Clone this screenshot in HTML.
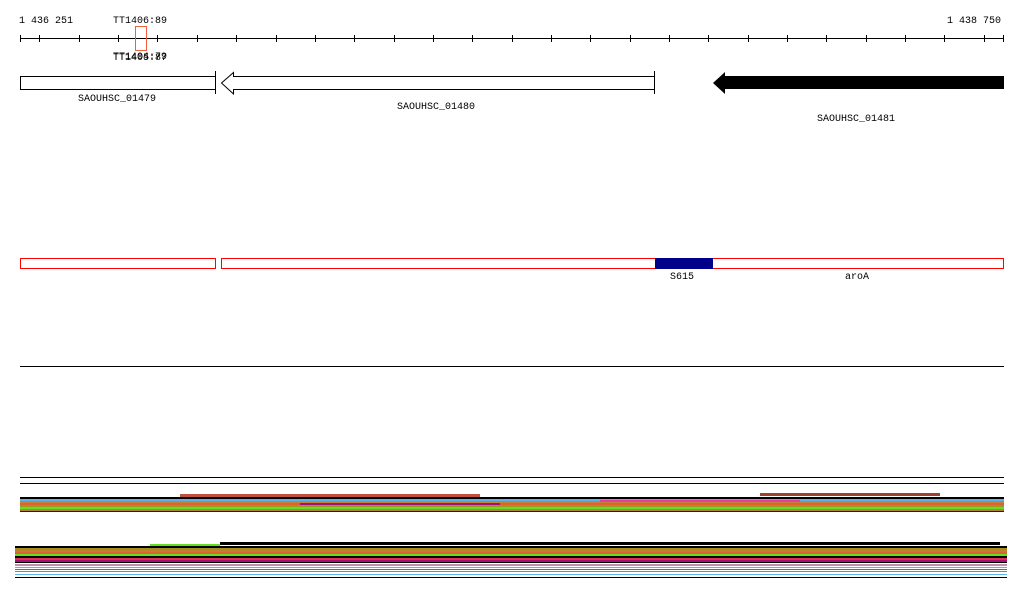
<!DOCTYPE html>
<html><head><style>html,body{margin:0;padding:0;background:#fff;width:1024px;height:611px;overflow:hidden}
svg text{font-family:"Liberation Mono",monospace;font-size:10px}</style></head><body>
<svg width="1024" height="611" xmlns="http://www.w3.org/2000/svg" shape-rendering="crispEdges">
<text x="19" y="23">1 436 251</text>
<text x="113" y="23">TT1406:89</text>
<text x="947" y="23">1 438 750</text>
<line x1="20" y1="38.5" x2="1004" y2="38.5" stroke="#000"/>
<g stroke="#000">
<line x1="20.5" y1="35" x2="20.5" y2="42"/><line x1="39.5" y1="35" x2="39.5" y2="42"/><line x1="79.5" y1="35" x2="79.5" y2="42"/><line x1="118.5" y1="35" x2="118.5" y2="42"/><line x1="157.5" y1="35" x2="157.5" y2="42"/><line x1="197.5" y1="35" x2="197.5" y2="42"/><line x1="236.5" y1="35" x2="236.5" y2="42"/><line x1="276.5" y1="35" x2="276.5" y2="42"/><line x1="315.5" y1="35" x2="315.5" y2="42"/><line x1="354.5" y1="35" x2="354.5" y2="42"/><line x1="394.5" y1="35" x2="394.5" y2="42"/><line x1="433.5" y1="35" x2="433.5" y2="42"/><line x1="472.5" y1="35" x2="472.5" y2="42"/><line x1="512.5" y1="35" x2="512.5" y2="42"/><line x1="551.5" y1="35" x2="551.5" y2="42"/><line x1="590.5" y1="35" x2="590.5" y2="42"/><line x1="630.5" y1="35" x2="630.5" y2="42"/><line x1="669.5" y1="35" x2="669.5" y2="42"/><line x1="708.5" y1="35" x2="708.5" y2="42"/><line x1="748.5" y1="35" x2="748.5" y2="42"/><line x1="787.5" y1="35" x2="787.5" y2="42"/><line x1="826.5" y1="35" x2="826.5" y2="42"/><line x1="866.5" y1="35" x2="866.5" y2="42"/><line x1="905.5" y1="35" x2="905.5" y2="42"/><line x1="944.5" y1="35" x2="944.5" y2="42"/><line x1="984.5" y1="35" x2="984.5" y2="42"/><line x1="1003.5" y1="35" x2="1003.5" y2="42"/>
</g>
<rect x="135.5" y="26.5" width="11" height="24" fill="none" stroke="#f06040"/>
<text x="113" y="59">TT1404:79</text>
<text x="113" y="60">TT1405:87</text>
<rect x="20.5" y="76.5" width="195" height="13" fill="#fff" stroke="#000"/>
<line x1="215.5" y1="71" x2="215.5" y2="94" stroke="#000"/>
<text x="78" y="101">SAOUHSC_01479</text>
<path d="M221.5 83 L233.5 72.5 L233.5 76.5 L654.5 76.5 L654.5 89.5 L233.5 89.5 L233.5 94 Z" fill="#fff" stroke="#000" shape-rendering="auto"/>
<line x1="654.5" y1="71" x2="654.5" y2="94" stroke="#000"/>
<text x="397" y="109">SAOUHSC_01480</text>
<path d="M713 83 L725 72 L725 76 L1004 76 L1004 89 L725 89 L725 94 Z" fill="#000" shape-rendering="auto"/>
<text x="817" y="121">SAOUHSC_01481</text>
<rect x="20.5" y="258.5" width="195" height="10" fill="#fff" stroke="#f00"/>
<rect x="221.5" y="258.5" width="782" height="10" fill="#fff" stroke="#f00"/>
<rect x="655" y="258" width="58" height="11" fill="#00008b"/>
<text x="670" y="279">S615</text>
<text x="845" y="279">aroA</text>
<line x1="20" y1="366.5" x2="1004" y2="366.5" stroke="#000"/>
<line x1="20" y1="477.5" x2="1004" y2="477.5" stroke="#000"/>
<line x1="20" y1="483.5" x2="1004" y2="483.5" stroke="#000"/>
<g>
<rect x="20" y="497" width="984" height="2" fill="#000"/>
<rect x="20" y="499" width="984" height="2" fill="#5ab4e8"/>
<rect x="20" y="501" width="984" height="2" fill="#c8803c"/>
<rect x="20" y="503" width="984" height="2" fill="#e06030"/>
<rect x="20" y="505" width="984" height="2" fill="#9a9a20"/>
<rect x="20" y="507" width="984" height="2" fill="#60e020"/>
<rect x="20" y="509" width="984" height="2" fill="#b08040"/>
<rect x="20" y="511" width="984" height="1" fill="#102050"/>
<rect x="760" y="493" width="180" height="3" fill="#a04030"/>
<rect x="180" y="494" width="300" height="3" fill="#c05040"/>
<rect x="300" y="503" width="200" height="2" fill="#a01080"/>
<rect x="600" y="500" width="200" height="2" fill="#e040a0"/>
</g>
<g>
<rect x="15" y="546" width="992" height="2" fill="#000"/>
<rect x="15" y="548" width="992" height="2" fill="#a09020"/>
<rect x="15" y="550" width="992" height="2" fill="#c08030"/>
<rect x="15" y="552" width="992" height="2" fill="#e06030"/>
<rect x="15" y="554" width="992" height="2" fill="#60e020"/>
<rect x="15" y="556" width="992" height="2" fill="#000"/>
<rect x="15" y="558" width="992" height="2" fill="#e03050"/>
<rect x="15" y="560" width="992" height="2" fill="#a01070"/>
<rect x="15" y="562" width="992" height="1" fill="#000"/>
<rect x="15" y="564" width="992" height="2" fill="#c090b0"/>
<rect x="15" y="567" width="992" height="1" fill="#5ab4e8"/>
<rect x="15" y="569" width="992" height="1" fill="#b040a0"/>
<rect x="15" y="571" width="992" height="1" fill="#a08040"/>
<rect x="15" y="574" width="992" height="1" fill="#5ab4e8"/>
<rect x="15" y="577" width="992" height="1" fill="#000"/>
<rect x="220" y="542" width="780" height="3" fill="#000"/>
<rect x="150" y="544" width="70" height="2" fill="#60e020"/>
</g>
</svg>
</body></html>
